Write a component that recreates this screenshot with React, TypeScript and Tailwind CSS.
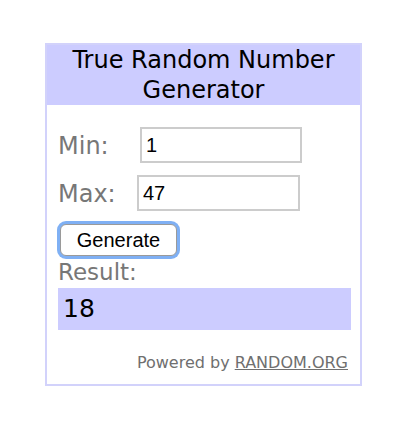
export default function App() {
  return (
    <div className="min-h-screen bg-white pt-[43px] pl-[45px] font-['DejaVu_Sans',Verdana,sans-serif]">
      {/* widget box */}
      <div className="w-[317px] border-2 border-[#d2d2fb] bg-white">
        <div className="bg-[#ccccff] text-center text-[24px] leading-[30px] text-black">
          True Random Number
          <br />
          Generator
        </div>

        <div className="pl-[11px] pr-[9px] pb-[11px]">
          <div className="mt-[22px] flex h-[36px] items-start">
            <span className="w-[82px] text-[24px] leading-[38px] text-[#777777]">Min:</span>
            <input
              defaultValue="1"
              className="h-[36px] w-[162px] border-2 border-[#cccccc] px-[4px] font-['Liberation_Sans',Arial,sans-serif] text-[20px] text-black outline-none"
            />
          </div>
          <div className="mt-[12px] flex h-[36px] items-start">
            <span className="w-[79px] text-[24px] leading-[38px] text-[#777777]">Max:</span>
            <input
              defaultValue="47"
              className="h-[36px] w-[163px] border-2 border-[#cccccc] px-[4px] font-['Liberation_Sans',Arial,sans-serif] text-[20px] text-black outline-none"
            />
          </div>

          <button className="ml-[2px] mt-[13px] block h-[32px] w-[117px] rounded-[6px] border border-[#9a9a9a] bg-white font-['Liberation_Sans',Arial,sans-serif] text-[20px] leading-[28px] text-black ring-3 ring-[#7fb0f4]">
            Generate
          </button>

          <div className="mt-[2px] text-[23px] leading-[28px] text-[#777777]">Result:</div>
          <div className="mt-[2px] h-[42px] bg-[#ccccff] pl-[5px] text-[25px] leading-[42px] text-black">18</div>

          <div className="mt-[23px] mr-[3px] text-right text-[16px] leading-[20px] text-[#6f6f6f]">
            Powered by <a className="underline">RANDOM.ORG</a>
          </div>
        </div>
      </div>
    </div>
  );
}
